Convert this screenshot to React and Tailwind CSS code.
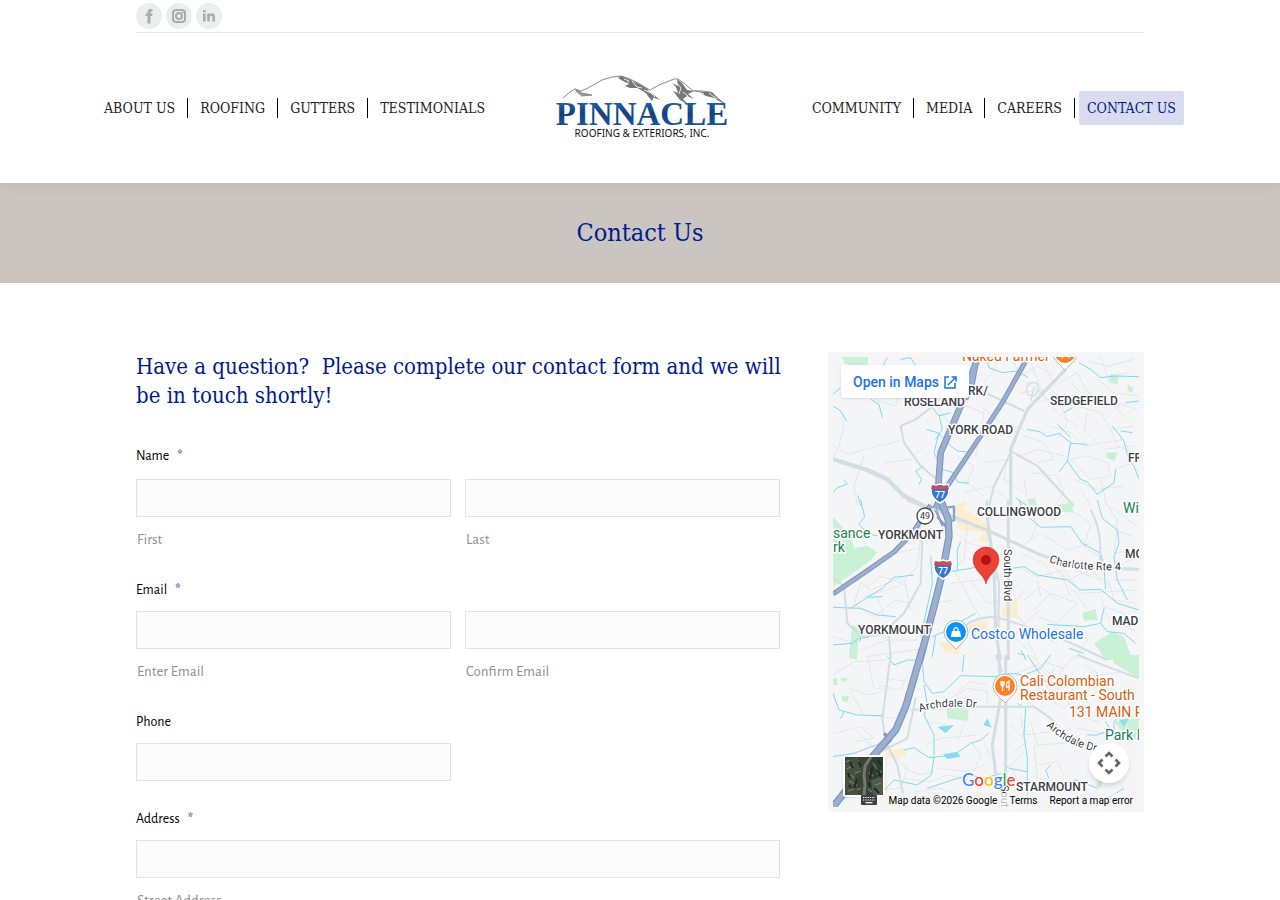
import React from 'react';

const social = [
    {
        name: 'Facebook',
        shape: <path d="M7 17V9.500H5V7H7V5.500Q7 2.500 10 2.500H12V5H10.800Q10 5 10 5.900V7H12L11.700 9.500H10V17Z" fill="currentColor" transform="translate(0.500 -0.500)" />,
    },
    {
        name: 'Instagram',
        shape: (
            <g fill="none" stroke="currentColor" strokeWidth="2">
                <rect x="3" y="3" width="12" height="12" rx="3" />
                <circle cx="9" cy="9" r="3" />
                <path d="M12 5.500H13.500" strokeWidth="1.500" />
            </g>
        ),
    },
    {
        name: 'LinkedIn',
        shape: (
            <path
                d="M3 6.500H5.600V14.500H3ZM3 3H5.600V5.300H3ZM7.200 6.500H9.700V7.600Q10.500 6.300 12.200 6.300Q15 6.300 15 9.700V14.500H12.400V10.100Q12.400 8.500 11.200 8.500Q9.800 8.500 9.800 10.300V14.500H7.200Z"
                fill="currentColor"
            />
        ),
    },
];

const leftMenu = ['About Us', 'Roofing', 'Gutters', 'Testimonials'];
const rightMenu = ['Community', 'Media', 'Careers', 'Contact Us'];

const slab = "font-['Roboto_Slab','DejaVu_Serif_Condensed','DejaVu_Serif',serif]";

function Menu({ items, active, className }) {
    return (
        <ul className={`flex items-center ${className}`}>
            {items.map((item, i) => (
                <li key={item} className="flex items-center">
                    {i > 0 && <span className="w-px h-5 mx-1 bg-black" />}
                    <a
                        href="#"
                        className={`px-2 h-[34px] leading-[34px] rounded-xs text-sm uppercase whitespace-nowrap ${
                            item === active ? 'bg-[#d9dcee] text-[#001c8b]' : 'text-[#222526]'
                        }`}
                    >
                        {item}
                    </a>
                </li>
            ))}
        </ul>
    );
}

function Logo() {
    return (
        <svg viewBox="0 0 180 70" className="w-[180px] h-[70px]" role="img" aria-label="Pinnacle Roofing & Exteriors, Inc.">
            <defs>
                <linearGradient id="logoBlue" x1="0" y1="0" x2="0" y2="1">
                    <stop offset="0" stopColor="#2f6fb5" />
                    <stop offset="0.5" stopColor="#123f80" />
                    <stop offset="1" stopColor="#2262a8" />
                </linearGradient>
            </defs>
            <g transform="translate(2 1)">
                <g fill="none" stroke="#8a8a8a" strokeWidth="1" strokeLinejoin="round">
                    <path d="M11 24L18 18L23 15L29 17L36 14L50 6L60 3L69 2L78 5L86 9L98 16L107 11L122 5L126 5L133 10L141 17L150 17L158 18L165 24L172 29" />
                    <path d="M23 15L30 19L40 21L30 22L24 17" fill="#999" />
                </g>
                <g fill="#777">
                    <path d="M69 2L79 6L89 11L97 16L92 18L86 14L78 14L73 12L77 10L71 7L66 4Z" />
                    <path d="M84 13L94 16L101 20L108 26L97 22L91 17Z" />
                    <path d="M97 20L102 22L100 27L95 21Z" />
                    <path d="M125 5L130 9L135 16L142 17L136 20L142 25L135 22L131 25L137 31L128 26L121 17L126 19L124 13L120 9L126 12Z" />
                    <path d="M141 16L152 18L160 18L172 30L162 24L154 22L148 19Z" />
                </g>
                <path d="M72 5L77 7L75 10M80 7L85 13L90 14M92 16L99 19L103 23M124 8L129 14L127 20M131 18L136 22M146 18L152 20M157 19L165 25" fill="none" stroke="#eee" />
            </g>
            <text x="92" y="52" textAnchor="middle" fill="url(#logoBlue)" className="font-['Liberation_Serif',serif] font-bold text-[33px]">
                PINNACLE
            </text>
            <text x="92" y="64" textAnchor="middle" fill="#111" className="font-['Noto_Sans',sans-serif] text-[10px]">
                ROOFING &amp; EXTERIORS, INC.
            </text>
        </svg>
    );
}

function Label({ htmlFor, children, required }) {
    return (
        <label htmlFor={htmlFor} className="block text-sm leading-5 text-black">
            {children}
            {required && <span className="ml-2 text-[#1c34a0]">*</span>}
        </label>
    );
}

function Field({ id, hint, type = 'text', label }) {
    return (
        <div>
            <input
                id={id}
                type={type}
                aria-label={label}
                className="block w-full h-[38px] px-3 border border-[#e2e3e4] bg-[#fcfcfc] text-sm outline-none"
            />
            {hint && (
                <label htmlFor={id} className="block mt-[13px] pl-px text-[15px] leading-5 text-[#8f8f8f]">
                    {hint}
                </label>
            )}
        </div>
    );
}

const areas = [
    { x: 71, y: 49, text: 'ROSELAND' },
    { x: 135, y: 38, text: 'RK/' },
    { x: 115, y: 77, text: 'YORK ROAD' },
    { x: 217, y: 48, text: 'SEDGEFIELD' },
    { x: 144, y: 159, text: 'COLLINGWOOD' },
    { x: 45, y: 182, text: 'YORKMONT' },
    { x: 25, y: 277, text: 'YORKMOUNT' },
    { x: 183, y: 434, text: 'STARMOUNT' },
    { x: 279, y: 268, text: 'MADISON' },
    { x: 292, y: 201, text: 'MONTCLAIRE' },
    { x: 295, y: 105, text: 'FREEDOM' },
];

const places = [
    { x: 129, y: 4, text: 'Naked Farmer', color: '#d85d0e' },
    { x: 187, y: 329, text: 'Cali Colombian', color: '#d85d0e' },
    { x: 187, y: 343, text: 'Restaurant - South', color: '#d85d0e' },
    { x: 236, y: 360, text: '131 MAIN Restaurant', color: '#d85d0e' },
    { x: 138, y: 282, text: 'Costco Wholesale', color: '#1a73e8' },
    { x: 0, y: 181, text: 'sance', color: '#188055' },
    { x: 0, y: 195, text: 'rk', color: '#188055' },
    { x: 290, y: 156, text: 'Windsor', color: '#188055' },
    { x: 272, y: 383, text: 'Park Road', color: '#188055' },
];

function Shield({ x, y }) {
    return (
        <g transform={`translate(${x} ${y})`}>
            <path d="M-8 -9Q-4 -7 0 -9Q4 -7 8 -9Q12 4 0 10Q-12 4 -8 -9Z" fill="#3876cb" stroke="#fff" strokeWidth="1.5" />
            <path d="M-8 -8Q-4 -6 0 -8Q4 -6 8 -8L9 -4H-9Z" fill="#d9484b" />
            <text y="5" textAnchor="middle" fill="#fff" className="text-[9px] font-medium">77</text>
        </g>
    );
}

function Place({ x, y, color, children }) {
    return (
        <g transform={`translate(${x} ${y})`}>
            <path d="M0 17L-8 9A12 12 0 1 1 8 9Z" fill="#fff" stroke="#bbb" strokeWidth="1" />
            <circle r="10" fill={color} />
            {children}
        </g>
    );
}

function Fork() {
    return <path d="M-4 -5V-2Q-4 0 -2.500 0V5M-1 -5V-2Q-1 0 -2.500 0V-5M4 5V-5Q1 -4 1.500 1H4" fill="none" stroke="#fff" strokeWidth="1.300" />;
}

function MapDrawing() {
    return (
        <svg
            viewBox="0 0 306 450"
            preserveAspectRatio="xMidYMid slice"
            className="block w-full h-full bg-[#f4f5f6] font-[Roboto,sans-serif]"
            role="img"
            aria-label="Map of the office and the streets around it"
        >
            <defs>
                <path id="archdaleWest" d="M87 355Q112 346 152 352" />
                <path id="archdaleEast" d="M213 369Q238 393 275 396" />
                <path id="route4" d="M216 205Q240 215 300 213" />
            </defs>

            {/* north */}
            <g transform="scale(0.33333) translate(-27 -33)" fill="none" strokeLinejoin="round">
                <path d="M55 33H132V55L95 66L60 50ZM860 85L885 92L880 115L852 108ZM912 115L930 128L920 140L910 132ZM845 322L880 318L872 346L848 335ZM610 460L632 455L640 480H618Z" fill="#c8f1d6" />
                <path d="M400 470L425 466L428 482H402Z" fill="#fbeed0" />
                <g stroke="#e3e7eb" strokeWidth="3">
                    <path d="M27 300L75 325L160 300L228 285M120 330L90 420L100 480M27 335L45 300L60 240L55 200M180 350L260 340L300 300M230 90L215 180L150 160M250 140L330 170L380 240M480 110L520 60L500 33M470 180L530 230L600 250M400 170L480 200L455 330" />
                    <path d="M560 33L590 90L640 60L690 90M570 90L640 130L700 200L760 240M620 50L660 150L700 180M650 33L690 120L760 80L790 140M590 140L680 130L730 170L800 140M640 170L700 150L730 230L700 280M740 110L800 170L850 160L900 210M760 180L830 200L860 250L930 240M680 240L740 260L780 300L900 280M790 200L780 250L840 310L930 300" />
                    <path d="M480 350L550 340L540 400L600 440M600 270L660 290L690 340L640 350M590 330L640 310L720 330M620 380L700 390L720 440L690 480M600 400L610 460M740 340L790 330L850 350L860 390L800 400L770 370ZM860 250L880 300L930 320M870 370L930 350M750 400L820 430L900 420M770 430L800 480M830 400L850 480M400 330L450 360L430 410M420 400L480 450" />
                    <path d="M790 45L850 60L930 40M830 33L850 90L910 80M820 100L870 140L945 150M880 170L940 190M420 440L500 420L550 460" />
                </g>
                <path d="M610 145Q600 105 635 110Q655 130 630 150ZM630 125L620 165" stroke="#d8dbe0" strokeWidth="4" />
                <g stroke="#7fd9ee" strokeWidth="3">
                    <path d="M27 145L50 125M27 180L50 195L68 225M140 160L165 175L175 215M190 35L178 58M230 40L260 35L285 75L330 100M485 33L495 65L535 80L580 75L612 95M310 165L345 210L380 200M345 205L355 250L335 280M308 250L345 262L380 300L400 315L430 318M345 262L330 320L355 370L390 380L400 408L435 412M27 440L40 425L68 415M70 415L60 402M285 415L293 400L275 375L300 360" />
                    <path d="M610 250L650 258L668 272L705 262L740 290L730 345L705 378M700 235L740 275M738 292L790 295M730 345L770 400L790 408L820 445L870 410L875 370M765 50L800 70L830 95L870 90L945 92M720 200L745 185M905 170L945 165M865 240L900 285L915 345L930 360L945 400M890 255L925 260M575 455L610 480M102 448L110 480" />
                </g>
                <g stroke="#d3dde4">
                    <path d="M27 340L130 372L190 400L240 450L310 485" strokeWidth="13" />
                    <path d="M725 70L610 190L560 310V480" strokeWidth="10" />
                    <path d="M440 120L600 195M560 315L640 360L750 480M560 320L510 420L495 480M340 170L275 220L230 240L240 290L290 360L345 405" strokeWidth="6" />
                </g>
                <g stroke="#7d93bd">
                    <path d="M462 33L410 180L350 320L343 420L345 500" strokeWidth="20" />
                    <path d="M455 60L446 110L425 160M605 45L535 170L470 270L370 420L330 490" strokeWidth="15" />
                </g>
                <g stroke="#9bb0cf">
                    <path d="M462 33L410 180L350 320L343 420L345 500" strokeWidth="14" />
                    <path d="M455 60L446 110L425 160M605 45L535 170L470 270L370 420L330 490" strokeWidth="9" />
                </g>
            </g>

            {/* centre */}
            <g transform="scale(0.33333) translate(-27 429)" fill="none" strokeLinejoin="round">
                <path d="M27 50L75 105L92 145L130 137L160 158L135 185L40 252L27 262ZM85 375L130 395L103 420L98 480L74 472ZM700 15L740 8L750 38L715 35ZM775 340L815 327L822 360L780 362ZM810 430L865 397L900 410L925 480H845Z" fill="#c8f1d6" />
                <path d="M395 10L450 45L500 80V125H460L480 95L400 90ZM545 300L580 292V355L530 350ZM430 375L490 360V400L440 410ZM345 425L420 430L400 465L360 455Z" fill="#fbeed0" />
                <g stroke="#e3e7eb" strokeWidth="3">
                    <path d="M27 180L70 220L140 270L240 230M110 250L90 310L150 350L215 300L260 310M130 260L170 230L210 240L250 260M120 290L220 260L280 200L290 110M160 290L180 350M240 240L260 330M170 170L300 140M110 450L190 420L280 420M130 470L300 445M27 410L95 430L80 480M330 310L390 300M380 60L430 70L420 180L370 220M390 210L450 320L475 360M380 250L460 240L540 230M440 240L490 310L530 300M400 100L430 130L480 140" />
                    <path d="M560 60L640 30L690 60L720 0M600 0L640 70L620 120M590 140L650 100L730 150L800 130M740 30L800 70L780 140L840 180M840 0L880 60L870 160L930 150M860 20L940 80M870 90L930 110M680 190L730 240L800 210L860 260M580 200L640 230L720 210L770 280L940 270M600 300L650 260L700 300L750 270L790 330M630 330L680 280L760 310L700 370L640 350M580 350L630 400L700 430M590 380L650 330M850 230L870 300L940 310M830 290L850 350L940 370M600 400L640 480M750 370L790 420L750 480M850 380L890 370L940 400M880 200L940 170" />
                    <path d="M590 160L660 190L690 240M640 240L650 290M710 220L740 290M840 320L900 340L910 380M750 210L830 240M560 320L600 370M560 400L610 450M600 270L580 300M870 240L940 240" />
                </g>
                <g stroke="#7fd9ee" strokeWidth="3">
                    <path d="M110 0L122 50L105 72L130 100L160 108M27 322L110 325L160 345L215 350M80 325L130 292L175 290M130 292L175 265L210 232L270 225M27 435L85 430L105 415L135 412M108 425L112 400M320 170L325 250L308 330L290 410M410 125L400 150V215M380 215L440 205L460 200M565 205L600 200L640 225L730 240L770 270L830 268L880 310L945 330M585 0L600 40L650 82L740 80L775 130L830 160L840 205L845 268M820 0L835 55L880 90L885 130L870 170L880 240L910 300M325 410L360 395L400 370L455 340M335 405L325 470M580 460L600 465L605 480M590 450L600 465M670 373L780 380L830 370L850 395L900 400L935 430M840 325L830 370M735 445L780 460" />
                </g>
                <g stroke="#d3dde4">
                    <path d="M250 0L400 55L500 95L650 165L760 202L945 208" strokeWidth="9" />
                    <path d="M553 0V480M490 50L510 200L515 400L530 480" strokeWidth="9" />
                    <path d="M488 0L492 100L525 250L522 480M800 30Q835 90 828 180M370 408C430 370 480 335 540 358L700 410L850 480M27 230L60 260L70 370L110 410L170 405L240 340L290 250L295 130L285 70M200 480L195 400" strokeWidth="6" />
                </g>
                <g stroke="#7d93bd">
                    <path d="M350 0L373 60L375 110L355 220L330 320L285 490" strokeWidth="22" />
                    <path d="M27 282L130 212L210 156L265 100L320 15" strokeWidth="15" />
                    <path d="M335 30L355 75L390 60V20L350 25M340 50L370 85" strokeWidth="7" />
                </g>
                <g stroke="#9bb0cf">
                    <path d="M350 0L373 60L375 110L355 220L330 320L285 490" strokeWidth="15" />
                    <path d="M27 282L130 212L210 156L265 100L320 15" strokeWidth="9" />
                    <path d="M335 30L355 75L390 60V20L350 25" strokeWidth="3" />
                </g>
            </g>

            {/* south */}
            <g transform="scale(0.33333) translate(-27 894)" fill="none" strokeLinejoin="round">
                <path d="M368 155L435 165L430 198L370 190ZM27 70H40V90H27ZM50 68L72 70L66 80L52 78ZM52 122L75 124L70 143L55 138ZM860 0H945V70L870 25ZM870 200L945 190V260L900 235ZM820 370L838 370L830 400L818 395Z" fill="#c8f1d6" />
                <path d="M340 215L390 210L365 235ZM490 190L503 218L478 210ZM358 298L400 290L410 305L370 312ZM885 195L915 190L900 215Z" fill="#8ddcec" />
                <path d="M185 285L245 280V305L190 310Z" fill="#fbeed0" />
                <g stroke="#e3e7eb" strokeWidth="3">
                    <path d="M27 60L90 20L190 15M75 100L130 120L180 110M80 110L120 180L210 190M27 235L110 215L150 250L90 260M100 230L150 280M160 90L230 105L250 60M190 70L250 80M130 0L150 100L200 105M400 110L440 80L490 90M380 130L430 100L490 110L490 150M400 160L400 120M350 140L440 125M310 200L370 210M440 260L470 300L450 350M240 340L290 360L330 350M200 290L250 340L230 400M120 285L140 260M560 60L640 30L700 100M570 100L620 80L680 140M620 0L680 60L780 80M640 110L720 160L800 100M690 40L660 120L730 90L800 150M700 110L760 170L740 200M590 180L600 240L680 230M620 200L640 270L720 265M630 265L640 370L700 380M600 290L560 330L580 380M640 330L700 320L720 360M700 60L750 0M780 30L830 60L900 50M560 210L610 260L570 290" />
                    <path d="M240 370L320 380L370 360L470 380M270 410L350 400L400 420M120 410L230 400M100 380L130 330M420 210L400 260M310 270L350 250L460 240M340 340L430 350L480 330M480 260L500 310M750 180L820 200L860 180M760 220L840 235M660 20L720 40L700 80" />
                </g>
                <g stroke="#7fd9ee" strokeWidth="3">
                    <path d="M27 115L45 165L100 180L180 182M60 170L50 190M190 5L210 30L250 15L275 15M295 15L300 80L325 115L360 110L410 62L515 65L560 55L600 60L650 40L680 0M420 0L415 50M300 90L310 150L300 180L330 240L330 300M27 305L90 295L170 265L215 235M170 265L190 280M240 285L270 278L315 308L390 300L440 265L470 255L495 235M330 305L322 360L280 390L210 375L180 405M310 400L400 370L440 360L480 370L530 355M580 145L605 160L600 240L610 310V455M540 325L555 340L610 350M610 0L640 45L665 80L690 90M675 370L665 345L680 330M730 380L760 375L820 400M845 200L860 225L820 240L790 240M870 250L870 200L890 180M850 430L900 400" />
                </g>
                <g stroke="#d3dde4">
                    <path d="M545 0V455M525 0L530 130L505 270L520 400" strokeWidth="9" />
                    <path d="M515 0L535 50M200 0L175 190L185 260L220 330L240 430M275 130L260 200L250 250L170 290M260 165L450 155H630L680 190L740 258L820 280M760 0L850 35L945 70" strokeWidth="6" />
                </g>
                <g stroke="#7d93bd">
                    <path d="M296 -20L245 155L215 225L150 300L20 465" strokeWidth="22" />
                    <path d="M180 235L200 255L160 295" strokeWidth="9" />
                </g>
                <path d="M296 -20L245 155L215 225L150 300L20 465" stroke="#9bb0cf" strokeWidth="15" />
            </g>

            <g stroke="#fff" strokeWidth="3" strokeLinejoin="round" paintOrder="stroke">
                <g fill="#3c4043" className="text-[12px] font-medium">
                    {areas.map((a) => (
                        <text key={a.text} x={a.x} y={a.y}>{a.text}</text>
                    ))}
                </g>
                <g className="text-[14px]">
                    {places.map((p) => (
                        <text key={p.text} x={p.x} y={p.y} fill={p.color}>{p.text}</text>
                    ))}
                </g>
                <g fill="#35383b" className="text-[12px]">
                    <text className="text-[11px]"><textPath href="#archdaleWest">Archdale Dr</textPath></text>
                    <text className="text-[11px]"><textPath href="#archdaleEast">Archdale Dr</textPath></text>
                    <text className="text-[11px]"><textPath href="#route4">Charlotte Rte 4</textPath></text>
                    <text transform="translate(171 192) rotate(90)" className="text-[11px]">South Blvd</text>
                    <text transform="translate(168 428) rotate(90)" className="text-[11px]">South Blvd</text>
                </g>
            </g>

            <Shield x={107} y={136} />
            <Shield x={110} y={212} />
            <circle cx="92" cy="159" r="8" fill="#fff" stroke="#444" strokeWidth="1.300" />
            <text x="92" y="162" textAnchor="middle" fill="#333" className="text-[9px]">49</text>

            <Place x={232} y={-4} color="#ff8126"><Fork /></Place>
            <Place x={172} y={329} color="#ff8126"><Fork /></Place>
            <Place x={123} y={275} color="#0a95f5">
                <path d="M-4 -1H4L5 5H-5Z" fill="#fff" />
                <path d="M-2 0V-3Q0 -6 2 -3V0" fill="none" stroke="#fff" strokeWidth="1.300" />
            </Place>

            <path d="M153 227C152 219 140 213 140 203A13 13 0 0 1 166 203C166 213 154 219 153 227Z" fill="#ea4335" stroke="#c5221f" strokeWidth="0.500" />
            <circle cx="153" cy="203" r="5" fill="#b31412" />

            <text x="129" y="429" stroke="#fff" strokeWidth="2" paintOrder="stroke" className="font-[Lato,sans-serif] font-medium text-[17px]">
                <tspan fill="#4285f4">G</tspan>
                <tspan fill="#ea4335">o</tspan>
                <tspan fill="#fbbc04">o</tspan>
                <tspan fill="#4285f4">g</tspan>
                <tspan fill="#34a853">l</tspan>
                <tspan fill="#ea4335">e</tspan>
            </text>
        </svg>
    );
}

function OfficeMap() {
    return (
        <div className="p-[5px] bg-[#f6f6f7]">
            <div className="relative h-[450px] overflow-hidden font-[Roboto,sans-serif]">
                <MapDrawing />
                <a
                    href="#"
                    className="absolute left-2 top-2 flex items-center gap-1 h-[33px] px-3 bg-white rounded-xs shadow text-sm font-medium text-[#1a73e8]"
                >
                    Open in Maps
                    <svg viewBox="0 0 14 14" className="w-3.5 h-3.5" fill="none" stroke="currentColor" strokeWidth="1.500">
                        <path d="M6 2H2V13H12V8M8.500 2H13V6.500M13 2L5 10" />
                    </svg>
                </a>
                <button
                    type="button"
                    aria-label="Show satellite imagery"
                    className="absolute left-2.5 bottom-2.5 w-[42px] h-[42px] border-2 border-white rounded-xs shadow overflow-hidden"
                >
                    <svg viewBox="0 0 38 38" className="block w-full h-full bg-[#38463a]">
                        <path d="M0 4L12 0L18 10L10 20L14 38H0Z" fill="#46513f" />
                        <path d="M22 0H38V16L30 24Z" fill="#2c3f31" />
                        <path d="M26 24L38 18V38H28Z" fill="#525a4c" />
                        <path d="M26 0L20 9L19 18L20 28L19 38" fill="none" stroke="#77776a" strokeWidth="3" />
                        <path d="M2 12L9 8M4 24L12 28M10 16L16 14M28 6L32 12M30 28L36 26M3 34L9 32M1 5L5 3M6 18L9 21M12 33L16 31M24 16L28 19M32 17L37 14M23 32L27 35" stroke="#75806a" strokeWidth="1.200" />
                        <path d="M5 5L8 11M12 22L9 31M27 10L25 22M33 14L36 20M29 31L34 36M3 16L5 21M14 5L16 10M33 3L36 8M4 28L6 31M24 25L25 30" stroke="#1d2b20" strokeWidth="2" />
                    </svg>
                </button>
                <button
                    type="button"
                    aria-label="Map camera controls"
                    className="absolute right-2.5 bottom-6 w-10 h-10 rounded-full bg-white shadow-md"
                >
                    <svg viewBox="0 0 40 40" className="block w-full h-full" fill="none" stroke="#666" strokeWidth="2.600">
                        <path d="M16.500 13.500L20 10L23.500 13.500M16.500 26.500L20 30L23.500 26.500M13.500 16.500L10 20L13.500 23.500M26.500 16.500L30 20L26.500 23.500" />
                    </svg>
                </button>
                <div className="absolute right-0 bottom-0 flex items-center h-3.5 text-[10px] text-black">
                    <button type="button" aria-label="Keyboard shortcuts" className="px-1.5 bg-[#f5f5f5]/70">
                        <svg viewBox="0 0 16 10" className="block w-4 h-2.5">
                            <rect width="16" height="10" rx="1" fill="#3c4043" />
                            <path d="M2 2.500H14M2 5H14" stroke="#fff" strokeWidth="1.200" strokeDasharray="1.300 1" />
                            <path d="M4.500 7.700H11.500" stroke="#fff" strokeWidth="1.200" />
                        </svg>
                    </button>
                    <span className="px-1.5 bg-[#f5f5f5]/70">Map data ©2026 Google</span>
                    <a href="#" className="px-1.5 bg-[#f5f5f5]/70">Terms</a>
                    <a href="#" className="px-1.5 bg-[#f5f5f5]/70">Report a map error</a>
                </div>
            </div>
        </div>
    );
}

export default function App() {
    return (
        <div className="min-h-screen bg-white font-['Alegreya_Sans',Lato,sans-serif]">
            <header className="relative bg-white shadow-[0_0_15px_1px_rgba(0,0,0,0.07)]">
                <div className="max-w-[1008px] mx-auto flex items-center gap-1 h-[33px] border-b border-[#e4e5e6]">
                    {social.map((item) => (
                        <a
                            key={item.name}
                            href="#"
                            aria-label={item.name}
                            className="flex items-center justify-center w-[26px] h-[26px] rounded-full bg-[#eceeed] text-[#aaacab]"
                        >
                            <svg viewBox="0 0 18 18" className="w-[18px] h-[18px]">{item.shape}</svg>
                        </a>
                    ))}
                </div>
                <nav className={`max-w-[1088px] mx-auto grid grid-cols-[1fr_auto_1fr] items-center h-[150px] ${slab}`}>
                    <Menu items={leftMenu} className="justify-start" />
                    <a href="#">
                        <Logo />
                    </a>
                    <Menu items={rightMenu} active="Contact Us" className="justify-end" />
                </nav>
            </header>

            <div className="flex items-center justify-center h-[100px] bg-[#cbc5c1]">
                <h1 className={`text-[25px] text-[#001c8b] ${slab}`}>Contact Us</h1>
            </div>

            <main className="max-w-[1008px] mx-auto pt-[69px] pb-16 flex items-start gap-8">
                <div className="flex-1">
                    <h2 className={`text-[22px] leading-[29px] text-[#001c8b] ${slab}`}>
                        Have a question?&nbsp; Please complete our contact form and we will be in touch shortly!
                    </h2>

                    <form className="mt-9 pr-4">
                        <Label htmlFor="first" required>Name</Label>
                        <div className="mt-[13px] mb-[30px] grid grid-cols-2 gap-3.5">
                            <Field id="first" hint="First" />
                            <Field id="last" hint="Last" />
                        </div>

                        <Label htmlFor="email" required>Email</Label>
                        <div className="mt-[11px] mb-[30px] grid grid-cols-2 gap-3.5">
                            <Field id="email" type="email" hint="Enter Email" />
                            <Field id="confirm" type="email" hint="Confirm Email" />
                        </div>

                        <Label htmlFor="phone">Phone</Label>
                        <div className="mt-[11px] mb-7 grid grid-cols-2 gap-3.5">
                            <Field id="phone" type="tel" />
                        </div>

                        <Label htmlFor="street" required>Address</Label>
                        <div className="mt-[11px]">
                            <Field id="street" hint="Street Address" />
                        </div>
                    </form>
                </div>

                <aside className="w-[316px] shrink-0">
                    <OfficeMap />
                </aside>
            </main>
        </div>
    );
}
